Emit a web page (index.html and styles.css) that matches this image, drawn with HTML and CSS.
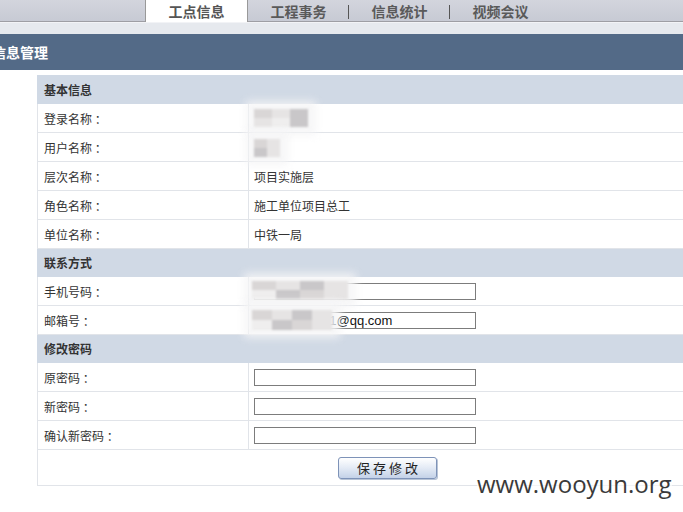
FILE: index.html
```html
<!DOCTYPE html>
<html lang="zh-CN">
<head>
<meta charset="utf-8">
<title>信息管理</title>
<link rel="stylesheet" href="styles.css">
</head>
<body>
<div class="topbar">
  <ul class="tabs">
    <li class="tab active">工点信息</li>
    <li class="tab">工程事务</li>
    <li class="tab sep">信息统计</li>
    <li class="tab sep">视频会议</li>
  </ul>
</div>
<div class="subbar"></div>
<div class="titlebar"><span class="title">信息管理</span></div>
<div class="content">
  <table class="info">
    <colgroup><col class="col-label"><col class="col-value"></colgroup>
    <tr class="section"><td colspan="2">基本信息</td></tr>
    <tr><td class="label">登录名称 ：</td><td class="value"><span class="mosaic m-login"><i></i><i></i><i></i><i></i><i></i><i></i></span></td></tr>
    <tr><td class="label">用户名称 ：</td><td class="value"><span class="mosaic m-user"><i></i><i></i><i></i><i></i></span></td></tr>
    <tr><td class="label">层次名称 ：</td><td class="value">项目实施层</td></tr>
    <tr><td class="label">角色名称 ：</td><td class="value">施工单位项目总工</td></tr>
    <tr><td class="label">单位名称 ：</td><td class="value">中铁一局</td></tr>
    <tr class="section"><td colspan="2">联系方式</td></tr>
    <tr><td class="label">手机号码 ：</td><td class="value"><div class="cell"><input class="field" type="text" value="13800000000"><span class="mosaic m-phone"><i></i><i></i><i></i><i></i><i></i><i></i><i></i><i></i></span></div></td></tr>
    <tr><td class="label">邮箱号 ：</td><td class="value"><div class="cell"><input class="field" type="text" value="12345678901@qq.com"><span class="mosaic m-mail"><i></i><i></i><i></i><i></i><i></i><i></i><i></i><i></i></span></div></td></tr>
    <tr class="section"><td colspan="2">修改密码</td></tr>
    <tr><td class="label">原密码 ：</td><td class="value"><input class="field" type="password"></td></tr>
    <tr><td class="label">新密码 ：</td><td class="value"><input class="field" type="password"></td></tr>
    <tr><td class="label">确认新密码 ：</td><td class="value"><input class="field" type="password"></td></tr>
    <tr class="actions"><td colspan="2"><button class="save" type="button">保存修改</button></td></tr>
  </table>
</div>
<div class="watermark">www.wooyun.org</div>
</body>
</html>
```

FILE: styles.css
```css
html, body {
  margin: 0;
  padding: 0;
  background: #ffffff;
  overflow: hidden;
  font-family: "Noto Sans CJK SC", "Noto Sans", sans-serif;
  font-size: 12px;
  color: #333;
}

.topbar {
  height: 21px;
  background: linear-gradient(#d3d5dd, #c7cad4);
  border-bottom: 1px solid #9e9ea4;
}

.tabs {
  list-style: none;
  margin: 0 0 0 145px;
  padding: 0;
  display: flex;
  height: 21px;
}

.tab {
  width: 101px;
  height: 21px;
  display: flex;
  align-items: center;
  justify-content: center;
  font-size: 14px;
  font-weight: bold;
  color: #5a5a5a;
  line-height: 1;
  position: relative;
}

.tab.active {
  background: #ffffff;
  border-left: 1px solid #999;
  border-right: 1px solid #999;
  height: 22px;
  color: #555;
}

.tab.sep::before {
  content: "";
  position: absolute;
  left: -1px;
  top: 5px;
  width: 1px;
  height: 14px;
  background: #555;
}

.subbar {
  height: 11px;
  border-top: 1px solid #f2f3f6;
  background: #e6e9ee;
}

.titlebar {
  height: 36px;
  background: #536a87;
  display: flex;
  align-items: center;
}

.title {
  margin-left: -8px;
  color: #ffffff;
  font-size: 14px;
  font-weight: bold;
}

.content {
  padding: 5px 0 0 37px;
}

.info {
  width: 701px;
  border-collapse: collapse;
  border: 1px solid #dde0e5;
  table-layout: fixed;
}

.col-label {
  width: 211px;
}

.info td {
  border: 1px solid #e1e4e9;
  height: 28px;
  padding: 0;
  vertical-align: middle;
}

.info .section td {
  background: #d0d9e5;
  font-weight: bold;
  color: #333;
  padding-left: 6px;
  border-color: #d0d9e5;
  height: 27px;
}

.info .label {
  padding-left: 6px;
  border-right: 1px solid #e1e4e9;
}

.info .value {
  padding-left: 5px;
}

.cell {
  position: relative;
  display: flex;
  align-items: center;
}

.field {
  box-sizing: border-box;
  width: 222px;
  height: 17px;
  margin: 0;
  padding: 0 2px;
  border: 1px solid #7c7c7c;
  border-radius: 0;
  background: #fff;
  font-family: "Liberation Sans", Arial, sans-serif;
  font-size: 13px;
  color: #111;
  display: block;
}

.mosaic {
  display: inline-grid;
  vertical-align: middle;
  filter: blur(1.2px);
  box-shadow: 0 0 8px 8px rgba(244, 244, 246, 0.85);
  background: rgba(244, 244, 246, 0.85);
}

.mosaic i {
  display: block;
  background: #d9d6d6;
}
.mosaic i:nth-child(2n) { background: #e6e4e4; }
.mosaic i:nth-child(3n) { background: #c9c7c9; }
.mosaic i:nth-child(5n) { background: #efeeee; }

.m-login {
  grid-template-columns: repeat(3, 18px);
  grid-template-rows: repeat(2, 9px);
  margin-top: -4px;
}

.m-user {
  grid-template-columns: repeat(2, 13px);
  grid-template-rows: repeat(2, 9px);
}

.m-phone {
  position: absolute;
  left: -2px;
  top: -2px;
  grid-template-columns: repeat(4, 24px);
  grid-template-rows: repeat(2, 9px);
}

.m-mail {
  position: absolute;
  left: -2px;
  top: -2px;
  grid-template-columns: repeat(4, 20px);
  grid-template-rows: repeat(2, 10px);
}

.info .actions td {
  height: 35px;
  text-align: center;
  border-color: #e1e4e9;
}

.save {
  width: 99px;
  height: 22px;
  margin: 0;
  border: 1px solid #7e93b8;
  border-radius: 3px;
  background: linear-gradient(#ffffff, #e3eaf5 50%, #c4d2e8);
  box-shadow: 1px 1px 0 #b8c4d6;
  font-family: "Noto Sans CJK SC", sans-serif;
  font-size: 13px;
  letter-spacing: 3px;
  color: #222;
  padding: 0 0 0 3px;
  line-height: 20px;
}

.watermark {
  position: absolute;
  left: 477px;
  top: 467px;
  font-family: "Open Sans", "Liberation Sans", sans-serif;
  font-size: 24px;
  color: #3a3a3a;
  background: rgba(255, 255, 255, 0.6);
  letter-spacing: 0;
}
```
